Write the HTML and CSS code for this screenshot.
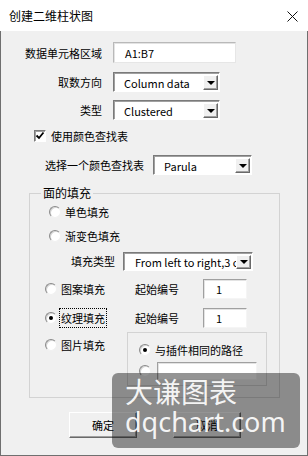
FILE: index.html
```html
<!DOCTYPE html>
<html lang="zh">
<head>
    <meta charset="UTF-8">
    <title>创建二维柱状图</title>
    <link rel="stylesheet" href="styles.css">
</head>
<body>
    <div class="window">
        <div class="titlebar">
            <span class="title">创建二维柱状图</span>
            <svg class="close" width="11" height="11" viewBox="0 0 11 11">
                <path d="M0.5 0.5 L10.5 10.5 M10.5 0.5 L0.5 10.5" stroke="#111" stroke-width="1" fill="none"/>
            </svg>
        </div>
        <div class="content">
            <div class="row r-range">
                <span class="label">数据单元格区域</span>
                <div class="textbox range-box">A1:B7</div>
            </div>
            <div class="row r-dir">
                <span class="label">取数方向</span>
                <div class="combo dir-combo"><span class="combo-text">Column data</span><span class="drop"></span></div>
            </div>
            <div class="row r-type">
                <span class="label">类型</span>
                <div class="combo dir-combo"><span class="combo-text">Clustered</span><span class="drop"></span></div>
            </div>
            <div class="row r-check">
                <span class="checkbox">
                    <svg width="10" height="10" viewBox="0 0 10 10"><path d="M1.5 4.5 L4 7 L8.5 1.5" stroke="#000" stroke-width="1.8" fill="none"/></svg>
                </span>
                <span class="check-label">使用颜色查找表</span>
            </div>
            <div class="row r-lut">
                <span class="lut-label">选择一个颜色查找表</span>
                <div class="combo lut-combo"><span class="combo-text">Parula</span><span class="drop"></span></div>
            </div>

            <div class="group fill-group">
                <div class="group-title">面的填充</div>
                <div class="row g-r1">
                    <span class="radio indent"></span>
                    <span class="opt">单色填充</span>
                </div>
                <div class="row g-r2">
                    <span class="radio indent"></span>
                    <span class="opt">渐变色填充</span>
                </div>
                <div class="row g-r3">
                    <span class="sub-label">填充类型</span>
                    <div class="combo grad-combo"><span class="combo-text">From left to right,3 colors</span><span class="drop"></span></div>
                </div>
                <div class="row g-r4">
                    <span class="radio"></span>
                    <span class="opt opt-fixed">图案填充</span>
                    <span class="start-label">起始编号</span>
                    <div class="textbox num-box">1</div>
                </div>
                <div class="row g-r5">
                    <span class="radio checked"></span>
                    <span class="opt opt-fixed"><span class="focus">纹理填充</span></span>
                    <span class="start-label">起始编号</span>
                    <div class="textbox num-box">1</div>
                </div>
                <div class="row g-r6">
                    <div class="row pic-row">
                        <span class="radio"></span>
                        <span class="opt opt-short">图片填充</span>
                    </div>
                    <div class="group path-group">
                        <div class="row p-r1">
                            <span class="radio checked"></span>
                            <span class="opt">与插件相同的路径</span>
                        </div>
                        <div class="row p-r2">
                            <span class="radio"></span>
                            <div class="textbox path-box"></div>
                        </div>
                    </div>
                </div>
            </div>

            <div class="buttons">
                <div class="btn">确定</div>
                <div class="btn">取消</div>
            </div>

            <div class="watermark">
                <div class="wm-cn">大谦图表</div>
                <div class="wm-en">dqchart.com</div>
            </div>
        </div>
    </div>
</body>
</html>
```

FILE: styles.css
```css
body {
    margin: 0;
    padding: 0;
    font-family: "Noto Sans CJK SC", "Noto Sans", sans-serif;
    font-size: 11px;
    color: #000;
    background: #f0f0f0;
}
.window {
    width: 308px;
    height: 456px;
    display: flex;
    flex-direction: column;
}
.titlebar {
    height: 31px;
    flex: none;
    background: #fff;
    display: flex;
    align-items: center;
    justify-content: space-between;
    padding: 0 10px 0 9px;
}
.title {
    font-size: 12px;
}
.close {
    display: block;
    margin-top: 1px;
}
.content {
    flex: 1;
    position: relative;
    background: #f0f0f0;
    border: 1px solid #6f6f6f;
    border-top: none;
}
.row {
    display: flex;
    align-items: center;
    height: 20px;
}
.label {
    width: 101px;
    text-align: right;
    margin-right: 11px;
}
.r-range {
    margin-top: 11px;
    height: 21px;
}
.r-dir {
    margin-top: 9px;
}
.r-type {
    margin-top: 8px;
}
.r-check {
    margin-top: 6px;
}
.r-lut {
    margin-top: 9px;
}

/* text fields */
.textbox {
    box-sizing: border-box;
    background: #fff;
    border: 1px solid;
    border-color: #a0a0a0 #f5f5f5 #f5f5f5 #a0a0a0;
    box-shadow: inset 1px 1px 0 #e3e3e3;
    display: flex;
    align-items: center;
    white-space: nowrap;
}
.range-box {
    width: 123px;
    height: 21px;
    padding-left: 11px;
    border-color: #b9b9b9 #e6e6e6 #e6e6e6 #b9b9b9;
}
.num-box {
    width: 44px;
    height: 20px;
    padding-left: 12px;
}
.path-box {
    width: 100px;
    height: 18px;
    margin-left: 6px;
}

/* combo boxes */
.combo {
    box-sizing: border-box;
    height: 20px;
    background: #fff;
    border: 1px solid;
    border-color: #7a7a7a #fff #fff #7a7a7a;
    box-shadow: inset 1px 1px 0 #a0a0a0;
    display: flex;
    align-items: center;
    padding: 2px 1px 1px 10px;
}
.combo-text {
    flex: 1;
    overflow: hidden;
    white-space: nowrap;
}
.drop {
    flex: none;
    box-sizing: border-box;
    width: 15px;
    height: 100%;
    background: #f0f0f0;
    border: 1px solid;
    border-color: #fff #696969 #696969 #fff;
    box-shadow: inset -1px -1px 0 #a0a0a0;
    display: flex;
    align-items: center;
    justify-content: center;
}
.drop::after {
    content: "";
    border-left: 4px solid transparent;
    border-right: 4px solid transparent;
    border-top: 4px solid #000;
    margin-top: 1px;
}
.dir-combo {
    width: 107px;
}
.lut-combo {
    width: 99px;
}
.grad-combo {
    width: 130px;
    height: 19px;
    padding-left: 11px;
}

/* checkbox */
.checkbox {
    box-sizing: border-box;
    width: 12px;
    height: 12px;
    margin-left: 33px;
    background: #fff;
    border: 1px solid;
    border-color: #7a7a7a #fff #fff #7a7a7a;
    box-shadow: inset 1px 1px 0 #a0a0a0;
    display: flex;
    align-items: center;
    justify-content: center;
}
.checkbox svg {
    display: block;
}
.check-label {
    margin-left: 5px;
}
.lut-label {
    margin-left: 44px;
    width: 99px;
    margin-right: 9px;
    white-space: nowrap;
}

/* group boxes */
.group {
    box-sizing: border-box;
    border: 1px solid #d3d3d3;
}
.fill-group {
    width: 251px;
    margin: 18px 0 0 28px;
    padding-bottom: 11px;
}
.group-title {
    width: max-content;
    margin: -9px 0 0 11px;
    padding: 0 2px;
    font-size: 12px;
    line-height: 16px;
    background: #f0f0f0;
}

/* radios */
.radio {
    flex: none;
    box-sizing: border-box;
    width: 12px;
    height: 12px;
    margin-left: 15px;
    border-radius: 50%;
    background: #fff;
    border: 1px solid;
    border-color: #8a8a8a #f0f0f0 #f0f0f0 #8a8a8a;
    box-shadow: inset 1px 1px 0 #d5d5d5;
    display: flex;
    align-items: center;
    justify-content: center;
}
.radio.indent {
    margin-left: 19px;
}
.radio.checked::after {
    content: "";
    width: 4px;
    height: 4px;
    border-radius: 50%;
    background: #000;
}
.opt {
    margin-left: 4px;
    white-space: nowrap;
}
.opt-fixed {
    width: 74px;
}
.opt-short {
    width: 66px;
}
.focus {
    outline: 1px dotted #000;
    outline-offset: 1px;
}
.g-r1 {
    margin-top: 1px;
}
.g-r2 {
    margin-top: 4px;
}
.g-r3 {
    margin-top: 5px;
}
.sub-label {
    margin-left: 41px;
    width: 44px;
    margin-right: 8px;
}
.g-r4 {
    margin-top: 8px;
}
.g-r5 {
    margin-top: 9px;
}
.start-label {
    width: 44px;
    margin-right: 24px;
}
.g-r6 {
    margin-top: 4px;
    height: auto;
    align-items: flex-start;
}
.pic-row {
    height: 25px;
}
.path-group {
    width: 140px;
    height: 54px;
}
.p-r1 {
    margin-top: 7px;
}
.p-r1 .radio,
.p-r2 .radio {
    margin-left: 11px;
}
.p-r2 {
    margin-top: 1px;
    height: 19px;
}

/* buttons */
.buttons {
    display: flex;
    margin: 14px 0 0 68px;
    gap: 36px;
}
.btn {
    box-sizing: border-box;
    width: 68px;
    height: 26px;
    background: #f0f0f0;
    border: 1px solid;
    border-color: #fff #696969 #696969 #fff;
    box-shadow: inset -1px -1px 0 #a0a0a0;
    display: flex;
    align-items: center;
    justify-content: center;
}

/* watermark overlay */
.watermark {
    position: absolute;
    left: 111px;
    top: 342px;
    width: 188px;
    height: 75px;
    border-radius: 6px;
    background: rgba(0, 0, 0, 0.42);
    color: rgba(255, 255, 255, 0.92);
    padding-left: 13px;
    box-sizing: border-box;
}
.wm-cn {
    font-size: 28px;
    line-height: 30px;
    margin-top: 3px;
}
.wm-en {
    font-family: "Noto Sans", "Open Sans", sans-serif;
    font-size: 27px;
    line-height: 32px;
}
```
